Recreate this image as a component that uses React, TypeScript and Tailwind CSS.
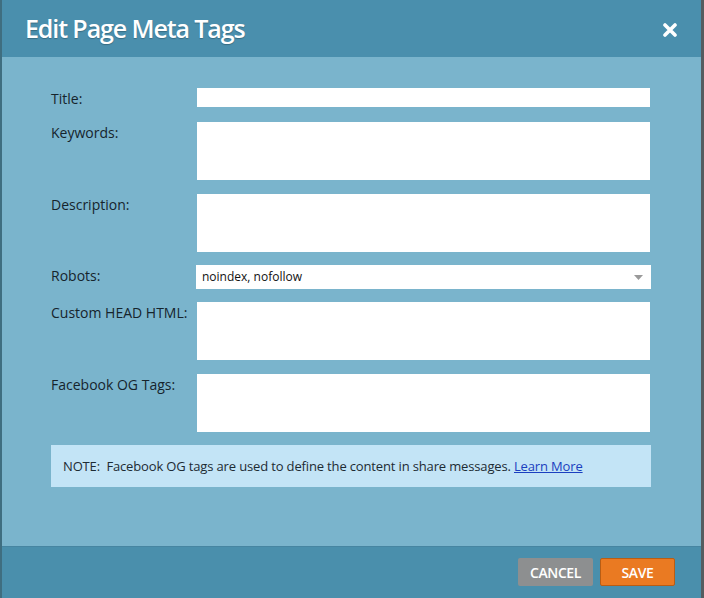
import React from 'react';

const font = { fontFamily: '"Open Sans", "Liberation Sans", sans-serif' };

function Row({ label, tall, children }: { label: string; tall?: boolean; children?: React.ReactNode }) {
  return (
    <div className="flex">
      <div className="w-[146px] shrink-0 pt-[2px] text-[14px] leading-[18px] text-[#16242c]">{label}</div>
      {children ?? <div className={`w-[453px] bg-white ${tall ? 'h-[58px]' : 'h-[19px]'}`} />}
    </div>
  );
}

export default function App() {
  return (
    <div className="h-[598px] w-[704px] flex flex-col bg-[#7ab4cc] border-l-2 border-l-[#3f6e80] border-r-[3px] border-r-[#555c60]" style={font}>
      <div className="h-[57px] shrink-0 flex items-center justify-between bg-[#4a8fad] pl-[23px] pr-[24px]">
        <h1 className="text-[25px] font-semibold text-white tracking-[-1.1px] [text-shadow:0_1px_1px_rgba(0,0,0,0.25)]">Edit Page Meta Tags</h1>
        <svg width="14" height="14" viewBox="0 0 14 14" className="mt-[2px]">
          <path d="M2 2 L12 12 M12 2 L2 12" stroke="white" strokeWidth="3.6" strokeLinecap="round" />
        </svg>
      </div>
      <div className="flex-1 pl-[49px] pt-[31px] flex flex-col">
        <Row label="Title:" />
        <div className="h-[14px]" />
        <Row label="Keywords:" tall />
        <div className="h-[14px]" />
        <Row label="Description:" tall />
        <div className="h-[13px]" />
        <Row label="Robots:">
          <div className="-ml-px w-[455px] h-[24px] bg-white flex items-center justify-between pl-[6px] pr-[8px] text-[12px] text-[#111]">
            <span>noindex, nofollow</span>
            <svg width="9" height="5" viewBox="0 0 9 5"><path d="M0 0 H9 L4.5 5 Z" fill="#9a9a9a" /></svg>
          </div>
        </Row>
        <div className="h-[13px]" />
        <Row label="Custom HEAD HTML:" tall />
        <div className="h-[14px]" />
        <Row label="Facebook OG Tags:" tall />
        <div className="h-[13px]" />
        <div className="w-[600px] h-[42px] bg-[#c3e4f6] flex items-center pl-[12px] pt-[1px] text-[13px] text-[#1d2b33] tracking-[-0.15px]">
          <span>
            NOTE:&nbsp; Facebook OG tags are used to define the content in share messages.{' '}
            <a href="#" className="text-[#1a3fc0] underline">Learn More</a>
          </span>
        </div>
      </div>
      <div className="h-[52px] shrink-0 bg-[#4a8fac] border-t border-t-[#4685a1] flex items-start justify-end gap-[7px] pt-[11px] pr-[26px]">
        <button className="w-[75px] h-[28px] rounded-[2px] bg-[#8d8f90] text-white text-[14px] font-semibold tracking-[-0.4px]">CANCEL</button>
        <button className="w-[75px] h-[28px] rounded-[2px] bg-[#ea7a22] border border-[#b85d14] text-white text-[14px] font-semibold tracking-[-0.4px]">SAVE</button>
      </div>
    </div>
  );
}
